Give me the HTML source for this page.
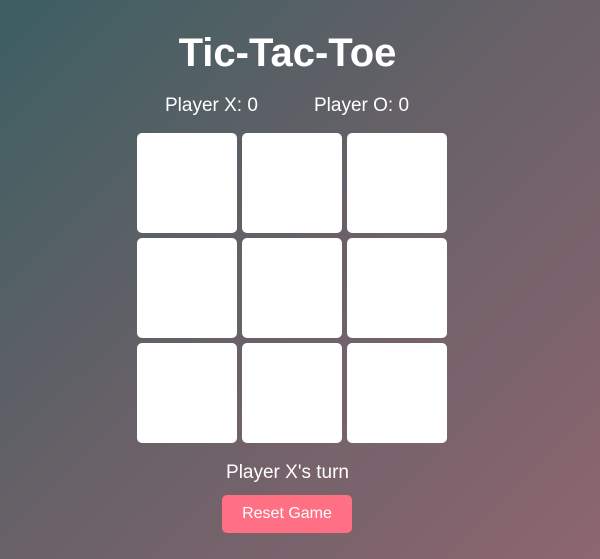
<!DOCTYPE html>
<html><head><style>
*{margin:0;padding:0;box-sizing:border-box}
body{width:600px;height:559px;overflow:hidden;font-family:"Liberation Sans",Arial,sans-serif;color:#fff;
background:linear-gradient(135deg,#3c5f62 0%,#6a6168 50%,#8d6670 100%);position:relative}
h1{position:absolute;left:0;width:575px;text-align:center;top:30px;font-size:40px;font-weight:bold;line-height:46px}
.s{position:absolute;top:95px;font-size:19px;line-height:22px}
.b{position:absolute;left:137px;top:133px;display:grid;grid-template-columns:repeat(3,100px);grid-template-rows:repeat(3,100px);gap:5px}
.b div{background:#fff;border-radius:5px}
.t{position:absolute;top:462px;left:0;width:575px;text-align:center;font-size:19px;line-height:22px}
.r{position:absolute;left:222px;top:495px;width:130px;height:38px;background:#ff7085;border-radius:5px;font-size:16px;line-height:38px;text-align:center}
</style></head><body>
<h1>Tic-Tac-Toe</h1>
<div class="s" style="left:165px">Player X: 0</div>
<div class="s" style="left:314px">Player O: 0</div>
<div class="b"><div></div><div></div><div></div><div></div><div></div><div></div><div></div><div></div><div></div></div>
<div class="t">Player X's turn</div>
<div class="r">Reset Game</div>
</body></html>
